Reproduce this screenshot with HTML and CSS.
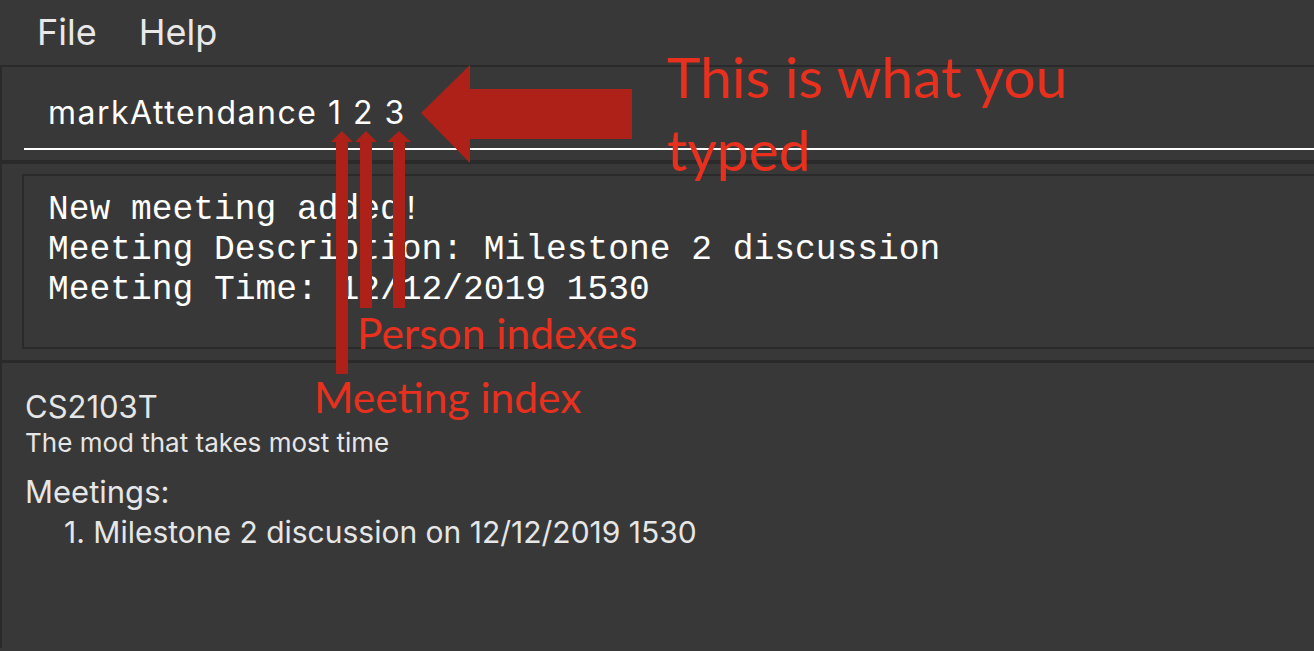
FILE: index.html
```html
<!DOCTYPE html>
<html>
<head>
<meta charset="utf-8">
<link rel="stylesheet" href="styles.css">
</head>
<body>
<div class="app">
  <div class="menubar">
    <span class="menu-item">File</span>
    <span class="menu-item">Help</span>
  </div>
  <div class="command">
    <div class="command-field">markAttendance 1 2 3</div>
  </div>
  <div class="result">
    <div class="result-box">
      <div class="result-line">New meeting added!</div>
      <div class="result-line">Meeting Description: Milestone 2 discussion</div>
      <div class="result-line">Meeting Time: 12/12/2019 1530</div>
    </div>
  </div>
  <div class="list">
    <div class="group-name">CS2103T</div>
    <div class="group-desc">The mod that takes most time</div>
    <div class="meetings-title">Meetings:</div>
    <div class="meeting-item">1. Milestone 2 discussion on 12/12/2019 1530</div>
  </div>

  <svg class="arrows" width="1314" height="651" viewBox="0 0 1314 651">
    <polygon fill="#ae2119" points="421,113 470,65 470,89 632,89 632,139 470,139 470,163"/>
    <polygon fill="#ae2119" points="342,131 353,142 348,142 348,374 336,374 336,142 331,142"/>
    <polygon fill="#ae2119" points="366,131 377,142 372,142 372,308 360,308 360,142 355,142"/>
    <polygon fill="#ae2119" points="399,131 411,142 405,142 405,308 393,308 393,142 387,142"/>
  </svg>
  <div class="note note-typed">This is what you<br>typed</div>
  <div class="note note-person">Person indexes</div>
  <div class="note note-meeting">Meeting index</div>
</div>
</body>
</html>
```

FILE: styles.css
```css
html, body {
  margin: 0;
  padding: 0;
  background: #383838;
  overflow: hidden;
}

.app {
  position: relative;
  width: 1314px;
  height: 651px;
  overflow: hidden;
  font-family: "Inter", "Liberation Sans", sans-serif;
}

.menubar {
  border-bottom: 2px solid #2a2a2a;
  display: flex;
  gap: 42px;
  padding: 12px 0 0 37px;
  box-sizing: content-box;
  height: 53px;
}

.menu-item {
  font-size: 36px;
  line-height: 40px;
  color: #e8e8e8;
}

.command {
  height: 93px;
  border-left: 2px solid #2a2a2a;
  box-sizing: border-box;
  padding: 26px 0 0 22px;
}

.command-field {
  border-bottom: 2px solid #ffffff;
  padding-left: 24px;
  height: 55px;
  font-size: 32px;
  line-height: 40px;
  color: #ffffff;
  letter-spacing: 1.5px;
}

.result {
  border-top: 4px solid #2a2a2a;
  border-left: 2px solid #2a2a2a;
  height: 200px;
  box-sizing: border-box;
  padding: 10px 0 0 20px;
}

.result-box {
  border: 2px solid #2a2a2a;
  height: 175px;
  box-sizing: border-box;
  margin-right: -40px;
  padding: 14px 0 0 24px;
}

.result-line {
  font-family: "Liberation Mono", monospace;
  font-size: 34.6px;
  line-height: 40px;
  color: #ffffff;
  white-space: pre;
}

.list {
  border-top: 3px solid #2a2a2a;
  border-left: 2px solid #2a2a2a;
  height: 288px;
  box-sizing: border-box;
  padding: 27px 0 0 23px;
  color: #e6e6e6;
}

.group-name {
  font-size: 31px;
  line-height: 34px;
}

.group-desc {
  font-size: 26px;
  line-height: 30px;
  margin-top: 4px;
}

.meetings-title {
  font-size: 31px;
  line-height: 34px;
  margin-top: 17px;
}

.meeting-item {
  font-size: 30px;
  line-height: 34px;
  margin-top: 6px;
  padding-left: 39px;
}

.arrows {
  position: absolute;
  left: 0;
  top: 0;
}

.note {
  position: absolute;
  font-family: "Lato", "Liberation Sans", sans-serif;
  color: #e8301e;
}

.note-typed {
  left: 667px;
  top: 40px;
  font-size: 57px;
  line-height: 73px;
}

.note-person {
  left: 357px;
  top: 311px;
  font-size: 42.5px;
  line-height: 44px;
}

.note-meeting {
  left: 314px;
  top: 375px;
  font-size: 42.5px;
  line-height: 44px;
}
```
